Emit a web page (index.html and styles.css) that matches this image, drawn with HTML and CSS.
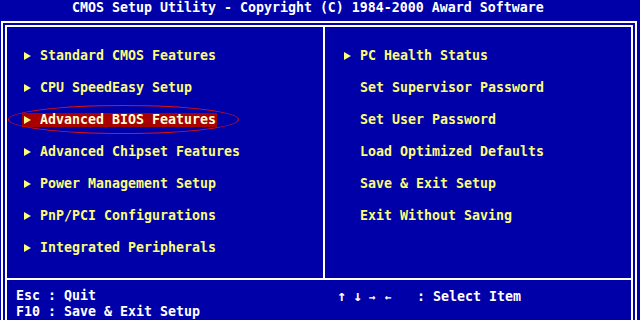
FILE: index.html
```html
<!DOCTYPE html>
<html lang="en">
<head>
  <meta charset="UTF-8">
  <title>CMOS Setup Utility</title>
  <link rel="stylesheet" href="styles.css">
</head>
<body>
  <div class="title">CMOS Setup Utility - Copyright (C) 1984-2000 Award Software</div>

  <div class="frame">
    <div class="menu">
      <ul class="col col-left">
        <li><span class="entry"><span class="arrow"></span>Standard CMOS Features</span></li>
        <li><span class="entry"><span class="arrow"></span>CPU SpeedEasy Setup</span></li>
        <li><span class="entry selected"><span class="arrow"></span>Advanced BIOS Features</span><span class="circle"></span></li>
        <li><span class="entry"><span class="arrow"></span>Advanced Chipset Features</span></li>
        <li><span class="entry"><span class="arrow"></span>Power Management Setup</span></li>
        <li><span class="entry"><span class="arrow"></span>PnP/PCI Configurations</span></li>
        <li><span class="entry"><span class="arrow"></span>Integrated Peripherals</span></li>
      </ul>
      <ul class="col col-right">
        <li><span class="entry"><span class="arrow"></span>PC Health Status</span></li>
        <li><span class="entry"><span class="arrow blank"></span>Set Supervisor Password</span></li>
        <li><span class="entry"><span class="arrow blank"></span>Set User Password</span></li>
        <li><span class="entry"><span class="arrow blank"></span>Load Optimized Defaults</span></li>
        <li><span class="entry"><span class="arrow blank"></span>Save &amp; Exit Setup</span></li>
        <li><span class="entry"><span class="arrow blank"></span>Exit Without Saving</span></li>
      </ul>
    </div>

    <div class="footer">
      <div class="keys keys-left">Esc : Quit
F10 : Save &amp; Exit Setup</div>
      <div class="keys keys-right"><span class="big">↑</span> <span class="big">↓</span> <span class="small">→</span> <span class="small">←</span>   : Select Item</div>
    </div>
  </div>
</body>
</html>
```

FILE: styles.css
```css
body {
  margin: 0;
  padding: 0;
  background-color: #0000a8;
  color: #ffffff;
  font-family: "DejaVu Sans Mono", "Liberation Mono", monospace;
  font-weight: bold;
  font-size: 13.29px;
  overflow: hidden;
  height: 320px;
}

.title {
  height: 21px;
  line-height: 15px;
  padding-left: 72px;
  white-space: pre;
}

.frame {
  box-sizing: border-box;
  width: 636px;
  height: 299px;
  margin-left: 1px;
  border: 6px double #ffffff;
  border-bottom: none;
  overflow: hidden;
}

.menu {
  display: grid;
  grid-template-columns: 318px 1fr;
  height: 251px;
  border-bottom: 2px solid #ffffff;
}

.col {
  list-style: none;
  margin: 0;
  padding: 13px 0 0 0;
}

.col-left {
  box-sizing: border-box;
  border-right: 2px solid #ffffff;
  padding-left: 17px;
}

.col-right {
  padding-left: 19px;
}

.col li {
  position: relative;
  height: 32px;
  display: flex;
  align-items: center;
}

.entry {
  display: inline-flex;
  align-items: center;
  line-height: 14px;
  color: #fcfc78;
  white-space: pre;
}

.entry.selected {
  background-color: #a80000;
  color: #ffffd8;
  margin-left: -2px;
  padding: 0 1px 0 2px;
}

.arrow {
  display: inline-block;
  width: 16px;
  height: 14px;
  position: relative;
}

.arrow::before {
  content: "";
  position: absolute;
  left: 0;
  top: 3px;
  border-left: 7px solid #fcfc78;
  border-top: 4px solid transparent;
  border-bottom: 4px solid transparent;
}

.arrow.blank::before {
  display: none;
}

.circle {
  position: absolute;
  left: -16px;
  top: 1px;
  width: 229px;
  height: 27px;
  border: 1px solid #e01010;
  border-radius: 50%;
}

.footer {
  display: grid;
  grid-template-columns: 318px 1fr;
  padding-top: 8px;
}

.keys {
  white-space: pre;
  line-height: 16px;
}

.keys-left {
  padding-left: 9px;
}

.keys-right {
  padding-left: 12px;
}

.big {
  font-size: 15px;
  display: inline-block;
  width: 8px;
}

.small {
  font-size: 11px;
  display: inline-block;
  width: 8px;
}
```
